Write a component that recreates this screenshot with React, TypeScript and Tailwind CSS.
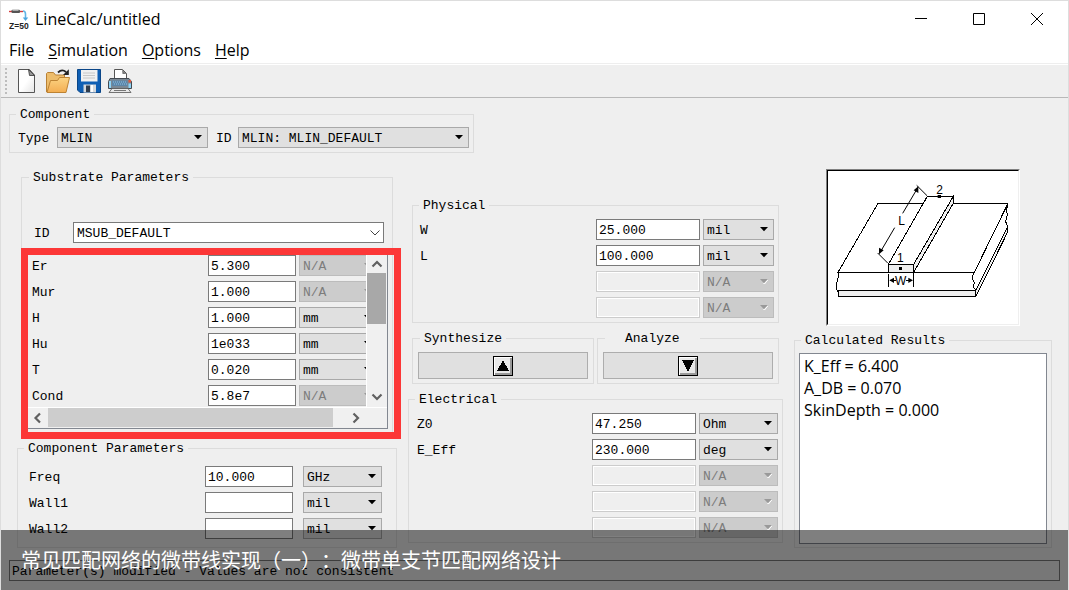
import { useId, type ReactNode } from "react";

type RowData = { label?: string; value: string; unit: string; disabled?: boolean; locked?: boolean };

const substrateRows: RowData[] = [
  { label: "Er", value: "5.300", unit: "N/A", locked: true },
  { label: "Mur", value: "1.000", unit: "N/A", locked: true },
  { label: "H", value: "1.000", unit: "mm" },
  { label: "Hu", value: "1e033", unit: "mm" },
  { label: "T", value: "0.020", unit: "mm" },
  { label: "Cond", value: "5.8e7", unit: "N/A", locked: true },
];

const componentRows: RowData[] = [
  { label: "Freq", value: "10.000", unit: "GHz" },
  { label: "Wall1", value: "", unit: "mil" },
  { label: "Wall2", value: "", unit: "mil" },
];

const physicalRows: RowData[] = [
  { label: "W", value: "25.000", unit: "mil" },
  { label: "L", value: "100.000", unit: "mil" },
  { value: "", unit: "N/A", disabled: true },
  { value: "", unit: "N/A", disabled: true },
];

const electricalRows: RowData[] = [
  { label: "Z0", value: "47.250", unit: "Ohm" },
  { label: "E_Eff", value: "230.000", unit: "deg" },
  { value: "", unit: "N/A", disabled: true },
  { value: "", unit: "N/A", disabled: true },
  { value: "", unit: "N/A", disabled: true },
];

function Group({ title, className = "", legendClass = "ml-1.5 px-1", children }: {
  title: string; className?: string; legendClass?: string; children: ReactNode;
}) {
  return (
    <fieldset className={`min-w-0 border border-[#dcdcdc] ${className}`}>
      <legend className={`pt-0.5 leading-[14px] ${legendClass}`}>{title}</legend>
      {children}
    </fieldset>
  );
}

function Drop({ id, label, value, width, disabled, plain }: {
  id?: string; label?: string; value: string; width: string; disabled?: boolean; plain?: boolean;
}) {
  const tone = plain
    ? "border-[#7a7a7a] bg-white text-black"
    : disabled
      ? "border-[#bcbcbc] bg-[#cccccc] text-[#7c7c7c]"
      : "border-[#a9a9a9] bg-[#e0e0e0] text-black";
  return (
    <span className={`relative block h-[21px] ${width}`}>
      <select id={id} aria-label={label} disabled={disabled} className={`block h-full w-full appearance-none border pt-0.5 pl-[3px] opacity-100 ${tone}`}>
        <option>{value}</option>
      </select>
      {plain ? (
        <svg className="pointer-events-none absolute top-2 right-1 h-[6px] w-[10px]" viewBox="0 0 10 6" fill="none" stroke="#444">
          <path d="M.5 .5 5 5 9.5 .5" />
        </svg>
      ) : (
        <svg className="pointer-events-none absolute top-2 right-1.5 h-[5px] w-2" viewBox="0 0 8 5">
          {disabled && <path d="M8 .5 4.5 5 3.5 4Z" fill="#fff" stroke="#fff" />}
          <path d="M0 0H8L4 4.3Z" fill={disabled ? "#999" : "#000"} />
        </svg>
      )}
    </span>
  );
}

function ParamRow({ row, inputWidth, unitWidth, gap }: { row: RowData; inputWidth: string; unitWidth: string; gap: string }) {
  const id = useId();
  const tone = row.disabled
    ? "border-[#cccccc] bg-[#efefef] shadow-[inset_0_0_0_1px_#fff]"
    : "border-[#7a7a7a] bg-white";
  return (
    <div className={`flex items-center ${gap}`}>
      <label htmlFor={id} className="min-w-0 flex-1 pt-0.5">{row.label}</label>
      <input
        id={id}
        aria-label={row.label ? undefined : "Unused parameter"}
        defaultValue={row.value}
        disabled={row.disabled}
        className={`h-[21px] shrink-0 border px-0.5 pt-0.5 ${inputWidth} ${tone}`}
      />
      <Drop label={`${row.label ?? "Unused"} unit`} value={row.unit} width={`shrink-0 ${unitWidth}`} disabled={row.disabled || row.locked} />
    </div>
  );
}

function AppIcon() {
  return (
    <svg className="h-5 w-5" viewBox="0 0 20 20">
      <path d="M0 2.5H14" stroke="#d43a3a" strokeWidth="1.4" />
      <rect x="2.5" y=".8" width="8.5" height="3.2" rx="1" fill="#555" />
      <rect x="3.5" y="1" width="6" height="1" fill="#aaa" />
      <path d="M14 2q2.500 0 2.500 3V9" fill="none" stroke="#62b5e6" strokeWidth="1.600" />
      <path d="M13.800 8.500H19.200L16.500 12Z" fill="#4aa6e0" />
      <text x="0" y="19.500" fontFamily="Liberation Sans, sans-serif" fontSize="8.500" fontWeight="bold" fill="#222">Z=50</text>
    </svg>
  );
}

function NewIcon() {
  return (
    <svg className="h-6 w-6" viewBox="0 0 24 24">
      <defs>
        <linearGradient id="paper" x1="0" y1="0" x2="1" y2="1">
          <stop offset=".5" stopColor="#fff" /><stop offset="1" stopColor="#e4e4e4" />
        </linearGradient>
      </defs>
      <path d="M3.500.5H14.500L19.500 6V23.500H3.500Z" fill="url(#paper)" stroke="#555" />
      <path d="M13.500.5 14.500 6.500H19.500Z" fill="#999" stroke="#333" strokeWidth=".8" />
    </svg>
  );
}

function OpenIcon() {
  return (
    <svg className="h-6 w-6" viewBox="0 0 24 24">
      <defs>
        <linearGradient id="folder" x1="0" y1="0" x2="0" y2="1">
          <stop stopColor="#fbd382" /><stop offset="1" stopColor="#f3ae52" />
        </linearGradient>
      </defs>
      <path d="M.5 23V4.500L1.500 3.500H7.500L9.500 6H18.500V12" fill="#edbd6c" stroke="#b98134" />
      <path d="M1 23.500 4.500 11.500H11.500L13.500 8.500H23.500L20 23.500Z" fill="url(#folder)" stroke="#bd8333" />
      <path d="M12 3.500Q16-.5 20 3" fill="none" stroke="#222" strokeWidth="1.800" />
      <path d="M22.800 .3V6H17Z" fill="#222" />
    </svg>
  );
}

function SaveIcon() {
  return (
    <svg className="h-6 w-6" viewBox="0 0 24 24">
      <path d="M.5.500H23.500V23.500H3L.5 21Z" fill="#0f5fb4" stroke="#0a4688" />
      <path d="M4 1H20.500V12.500H4Z" fill="#f1f1f1" />
      <path d="M6 4H18M6 6.500H18M6 9H18" stroke="#c8c8c8" />
      <path d="M6.500 15.500H19V23.500H6.500Z" fill="#d5d9dd" />
      <path d="M9 16.500H13V23H9Z" fill="#303c4c" />
      <path d="M14 16H16V23H14Z" fill="#fff" />
    </svg>
  );
}

function PrintIcon() {
  return (
    <svg className="h-6 w-6" viewBox="0 0 24 24">
      <path d="M6.500 10V.5H14.500L18.500 4.500V10Z" fill="#fff" stroke="#555" />
      <path d="M14 .500 14.500 5H18.500Z" fill="#777" />
      <path d="M2 9.500H21L23.500 12.500V19.500H.5V12.500Z" fill="#7b8894" stroke="#434a52" />
      <path d="M4 11.500H19.500V17H4Z" fill="#5d86a8" />
      <path d="M5 13H18M6 15H19" stroke="#8fc0e4" strokeDasharray="1 1" />
      <path d="M1 12H3V19H1Z" fill="#8ed3f5" />
      <path d="M20.500 11H23V13.500H20.500Z" fill="#e0573c" />
      <path d="M20.500 14.500H23V19H20.500Z" fill="#8ed3f5" />
      <path d="M4 19.500H20L23 23.500H1Z" fill="#e8e8e8" stroke="#555" strokeWidth=".8" />
      <path d="M6 21.500H18" stroke="#777" />
    </svg>
  );
}

function Microstrip() {
  return (
    <svg className="block aspect-[190/153] w-full" viewBox="114 33 570 459" fill="none" stroke="#000" strokeWidth="3">
      <g shapeRendering="crispEdges">
        <path d="M144 391H557L653 200 652 218 558 409H146Z" fill="#efefef" />
        <path d="M264 130H654L553 337H144Z" fill="#fff" />
        <path d="M144 337 146 345 143 360 139 372 140 388 145 396 146 409" />
        <path d="M553 337 546 353 553 368 550 380 557 391 556 400 558 409" />
        <path d="M654 130 650 150 652 165 647 185 653 200 652 218" />
        <path d="M371 313 490 109V130L371 337Z" fill="#efefef" />
        <path d="M295 313 412 109H490L371 313Z" fill="#fff" />
        <path d="M295 313H371V337H295Z" fill="#efefef" />
        <path d="M296 343V380M371 343V380M300 361H318M348 361H367" />
      </g>
      <path d="M380 76 411 107M263 279 293 309M381 87 338 160M314 203 271 276" />
      <g fill="#000" stroke="none">
        <path d="M385 79V99L371 91ZM267 283V263L281 271ZM298 361 312 353V369ZM369 361 355 353V369Z" />
        <path d="M327 321H336V330H327ZM443 105H453V114H443Z" />
        <g fontFamily="Liberation Sans, sans-serif" fontSize="36">
          <text x="439" y="102">2</text>
          <text x="325" y="195">L</text>
          <text x="321" y="305">1</text>
          <text x="315" y="374">W</text>
        </g>
      </g>
    </svg>
  );
}

function ArrowButton({ label, path }: { label: string; path: string }) {
  return (
    <button aria-label={label} className="flex h-[27px] w-full items-center justify-center border border-[#adadad] bg-[#e0e0e0]">
      <svg className="h-5 w-5" viewBox="0 0 20 20" shapeRendering="crispEdges">
        <rect x=".5" y=".5" width="19" height="19" fill="#e8e8e8" stroke="#000" />
        <path d="M1.500 18.500V1.500H18.500" fill="none" stroke="#fff" />
        <path d="M2 18H18V2" fill="none" stroke="#999" strokeWidth="2" />
        <path d={path} fill="#000" />
      </svg>
    </button>
  );
}

function ScrollArrow({ label, path, className }: { label: string; path: string; className: string }) {
  return (
    <button aria-label={label} className={`flex shrink-0 items-center justify-center ${className}`}>
      <svg className="h-3 w-3" viewBox="0 0 12 12" fill="none" stroke="#606060" strokeWidth="2.200">
        <path d={path} />
      </svg>
    </button>
  );
}

function MenuItem({ first, rest, underline = true }: { first: string; rest: string; underline?: boolean }) {
  return (
    <button className="px-[7px] leading-6">
      <span className={underline ? "underline underline-offset-2" : ""}>{first}</span>{rest}
    </button>
  );
}

export default function App() {
  return (
    <div className="relative min-h-screen overflow-hidden border-x border-t border-[#dddddd] bg-[#efefef] font-['Liberation_Mono',monospace] text-[13px] leading-4 text-black">
      <header className="bg-white font-['Open_Sans','Noto_Sans',sans-serif] text-base">
        <div className="flex h-[36px] items-center pr-0.5 pl-2">
          <AppIcon />
          <h1 className="ml-1.5 flex-1">LineCalc/untitled</h1>
          <button aria-label="Minimize" className="flex h-full w-[58px] items-center justify-center">
            <svg className="h-3 w-3" viewBox="0 0 12 12" stroke="#000"><path d="M0 5.500H12" /></svg>
          </button>
          <button aria-label="Maximize" className="flex h-full w-[58px] items-center justify-center">
            <svg className="h-3 w-3" viewBox="0 0 12 12" fill="none" stroke="#000"><path d="M.5.5H11.500V11.500H.5Z" /></svg>
          </button>
          <button aria-label="Close" className="flex h-full w-[58px] items-center justify-center">
            <svg className="h-3 w-3" viewBox="0 0 12 12" stroke="#000"><path d="M0 0 12 12M12 0 0 12" /></svg>
          </button>
        </div>
        <nav className="flex h-[27px] items-center border-b border-[#eeeeee] pl-px">
          <MenuItem first="F" rest="ile" underline={false} />
          <MenuItem first="S" rest="imulation" />
          <MenuItem first="O" rest="ptions" />
          <MenuItem first="H" rest="elp" />
        </nav>
      </header>

      <div role="toolbar" className="flex h-[34px] items-center border-t border-b border-t-white border-b-[#b8b8b8] pl-1">
        <span className="mr-1 h-[26px] border-l-2 border-dotted border-[#bdbdbd]" />
        <button aria-label="New" className="flex w-[31px] justify-center"><NewIcon /></button>
        <button aria-label="Open" className="flex w-[31px] justify-center"><OpenIcon /></button>
        <button aria-label="Save" className="flex w-[31px] justify-center"><SaveIcon /></button>
        <button aria-label="Print" className="flex w-[31px] justify-center"><PrintIcon /></button>
      </div>

      <main className="px-2 pt-2 pb-[9px]">
        <div className="flex">
          <Group title="Component">
            <div className="flex items-center px-1 pt-[5px] pb-1">
              <label htmlFor="type" className="w-[43px] pt-0.5 pl-1">Type</label>
              <Drop id="type" value="MLIN" width="w-[151px]" />
              <label htmlFor="component-id" className="w-[30px] pt-0.5 pl-2">ID</label>
              <Drop id="component-id" value="MLIN: MLIN_DEFAULT" width="w-[231px]" />
            </div>
          </Group>
        </div>

        <div className="mx-2 mt-4 grid grid-cols-[380fr_375fr_258fr] gap-x-[11px]">
          <div className="flex flex-col gap-[7px]">
            <div className="relative mx-1">
              <Group title="Substrate Parameters" legendClass="ml-[7px] px-1">
                <div className="flex items-center pt-[37px] pr-2 pl-3">
                  <label htmlFor="substrate-id" className="w-[39px] pt-0.5">ID</label>
                  <Drop id="substrate-id" value="MSUB_DEFAULT" width="flex-1" plain />
                </div>
                <div className="mx-1 mt-1.5 mb-[3px] border border-[#828790]">
                  <div className="flex">
                    <div className="min-w-0 flex-1 overflow-hidden pt-[5px] pb-px pl-[5px]">
                      <div className="-mr-3 flex flex-col gap-[5px]">
                        {substrateRows.map((row) => (
                          <ParamRow key={row.label} row={row} inputWidth="w-[88px]" unitWidth="w-[79px]" gap="gap-[3px]" />
                        ))}
                      </div>
                    </div>
                    <div className="flex w-[21px] flex-col border-l border-white bg-[#f0f0f0] pt-1 pr-px">
                      <ScrollArrow label="Scroll up" path="M1.500 8.500 6 4 10.500 8.500" className="h-[19px]" />
                      <div className="h-[51px] bg-[#a8a8a8]" />
                      <div className="flex-1" />
                      <ScrollArrow label="Scroll down" path="M1.500 3.500 6 8 10.500 3.500" className="h-[21px]" />
                    </div>
                  </div>
                  <div className="flex h-[21px] border-t border-white bg-[#f0f0f0] pb-px">
                    <ScrollArrow label="Scroll left" path="M8 1.500 3.500 6 8 10.500" className="w-[21px]" />
                    <div className="flex-1 bg-[#cdcdcd]" />
                    <div className="w-3" />
                    <ScrollArrow label="Scroll right" path="M3.500 1.500 8 6 3.500 10.500" className="w-[21px]" />
                    <div className="w-[21px]" />
                  </div>
                </div>
              </Group>
              <div className="pointer-events-none absolute top-[79px] -right-2 -bottom-1.5 left-0 border-[7px] border-[#fc3737]" />
            </div>

            <Group title="Component Parameters">
              <div className="flex flex-col gap-[5px] pt-2.5 pr-3.5 pb-2 pl-[11px]">
                {componentRows.map((row) => (
                  <ParamRow key={row.label} row={row} inputWidth="w-[88px]" unitWidth="w-[79px]" gap="gap-2.5" />
                ))}
              </div>
            </Group>
          </div>

          <div className="flex flex-col gap-[7px] pt-7">
            <Group title="Physical" className="mx-1">
              <div className="flex flex-col gap-[5px] pt-1.5 pr-1 pb-1 pl-[7px]">
                {physicalRows.map((row, i) => (
                  <ParamRow key={i} row={row} inputWidth="w-[104px]" unitWidth="w-[71px]" gap="gap-[3px]" />
                ))}
              </div>
            </Group>
            <div className="mx-1 grid grid-cols-2 gap-[3px]">
              <Group title="Synthesize" legendClass="ml-[7px] px-1">
                <div className="px-[5px] pt-1.5 pb-1">
                  <ArrowButton label="Synthesize" path="M10 4 16 15H4Z" />
                </div>
              </Group>
              <Group title="Analyze" legendClass="ml-[7px] px-5">
                <div className="px-[5px] pt-1.5 pb-1">
                  <ArrowButton label="Analyze" path="M4 4H16L10 16Z" />
                </div>
              </Group>
            </div>
            <Group title="Electrical">
              <div className="flex flex-col gap-[5px] pt-1.5 pr-1 pb-1 pl-2">
                {electricalRows.map((row, i) => (
                  <ParamRow key={i} row={row} inputWidth="w-[104px]" unitWidth="w-[79px]" gap="gap-[3px]" />
                ))}
              </div>
            </Group>
          </div>

          <div className="flex flex-col gap-1.5">
            <div className="mx-8 border border-t-[#808080] border-r-white border-b-white border-l-[#808080]">
              <div className="border border-t-black border-r-[#efefef] border-b-[#efefef] border-l-black bg-white">
                <Microstrip />
              </div>
            </div>
            <Group title="Calculated Results" className="flex flex-1 flex-col">
              <ul className="mx-1 mt-[5px] mb-[3px] flex-1 border border-[#828790] bg-white px-1 pt-px font-['Open_Sans','Noto_Sans',sans-serif] text-base leading-[22px]">
                <li>K_Eff = 6.400</li>
                <li>A_DB = 0.070</li>
                <li>SkinDepth = 0.000</li>
              </ul>
            </Group>
          </div>
        </div>

        <footer className="mt-3 h-[21px] border border-[#7a7a7a] pt-[3px] pl-0.5">
          Parameter(s) modified - Values are not consistent
        </footer>
      </main>

      <div className="absolute inset-x-0 bottom-0 flex h-[60px] items-center bg-black/50 pl-5 font-['Noto_Sans_CJK_SC',sans-serif] text-xl text-white [text-spacing-trim:space-all]">
        常见匹配网络的微带线实现（一）：微带单支节匹配网络设计
      </div>
    </div>
  );
}
